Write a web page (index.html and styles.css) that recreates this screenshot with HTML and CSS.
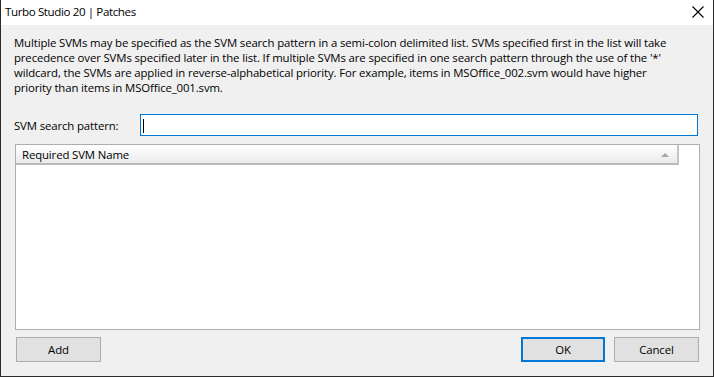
FILE: index.html
```html
<!DOCTYPE html>
<html>
<head>
<meta charset="utf-8">
<link rel="stylesheet" href="styles.css">
</head>
<body>
<div class="window">
  <div class="titlebar">
    <span class="title">Turbo Studio 20 | Patches</span>
    <svg class="close" width="12" height="12" viewBox="0 0 12 12"><path d="M0.5 0.5 L11.5 11.5 M11.5 0.5 L0.5 11.5" stroke="#000" stroke-width="1.1" fill="none"/></svg>
  </div>
  <div class="content">
    <p class="desc">Multiple SVMs may be specified as the SVM search pattern in a semi-colon delimited list. SVMs specified first in the list will take<br>precedence over SVMs specified later in the list. If multiple SVMs are specified in one search pattern through the use of the '*'<br>wildcard, the SVMs are applied in reverse-alphabetical priority. For example, items in MSOffice_002.svm would have higher<br>priority than items in MSOffice_001.svm.</p>
    <div class="row">
      <label class="label">SVM search pattern:</label>
      <div class="input"><span class="caret"></span></div>
    </div>
    <div class="list">
      <div class="header">
        <div class="col">Required SVM Name<span class="sort"></span></div>
      </div>
    </div>
    <div class="buttons">
      <button class="btn">Add</button>
      <div class="spacer"></div>
      <button class="btn default">OK</button>
      <button class="btn">Cancel</button>
    </div>
  </div>
</div>
</body>
</html>
```
FILE: styles.css
```css
* { box-sizing: border-box; }
html, body { margin: 0; padding: 0; }
body { width: 714px; height: 377px; overflow: hidden; font-family: "Open Sans", "Noto Sans", sans-serif; font-size: 12px; color: #000; }
.window {
  width: 714px; height: 377px;
  border: 1px solid #2b2b2b; border-top: none;
  background: #f0f0f0;
  display: flex; flex-direction: column;
}
.titlebar {
  height: 25px; background: #fff;
  display: flex; align-items: center; justify-content: space-between;
  padding: 0 9px 0 4px;
}
.title { font-size: 11.6px; letter-spacing: -0.4px; position: relative; top: -1px; }
.close { display: block; margin-top: -2px; }
.content { flex: 1; display: flex; flex-direction: column; padding: 0 13px 0 14px; }
.desc { margin: 10px 0 0 -1px; line-height: 15px; white-space: nowrap; font-size: 11.4px; letter-spacing: -0.13px; }
.row { display: flex; align-items: center; margin-top: 19px; height: 22px; }
.label { width: 126px; margin-left: -1px; font-size: 11.4px; letter-spacing: -0.13px; }
.input { flex: 1; height: 22px; background: #fff; border: 1px solid #0078d7; margin-right: 2px; padding: 4px 0 0 2px; }
.caret { display: block; width: 1px; height: 14px; background: #000; }
.list {
  margin-top: 8px; height: 186px;
  background: #fff; border: 1px solid #adadad;
}
.header { display: flex; height: 20px; }
.col {
  width: 663px; height: 20px;
  background: linear-gradient(#ffffff, #f3f3f3 60%, #eaeaea);
  border-bottom: 2px solid #b9b9b9; border-right: 2px solid #c4c4c4;
  position: relative; padding-left: 6px; line-height: 19px;
  font-size: 11.4px; letter-spacing: -0.13px;
}
.sort {
  position: absolute; right: 8px; top: 8px;
  width: 0; height: 0;
  border-left: 4px solid transparent; border-right: 4px solid transparent;
  border-bottom: 4px solid #a8a8a8;
}
.buttons { display: flex; margin-top: 7px; gap: 9px; }
.spacer { flex: 1; }
.btn {
  width: 85px; height: 25px; margin: 0;
  background: #e1e1e1; border: 1px solid #adadad;
  font-family: inherit; font-size: 11.4px; letter-spacing: -0.13px; color: #000;
  padding: 0 0 1px;
}
.btn:first-child { margin-left: 1px; }
.btn.default { width: 84px; border: 2px solid #0078d7; }
.btn:last-child { margin-right: 1px; }
```
